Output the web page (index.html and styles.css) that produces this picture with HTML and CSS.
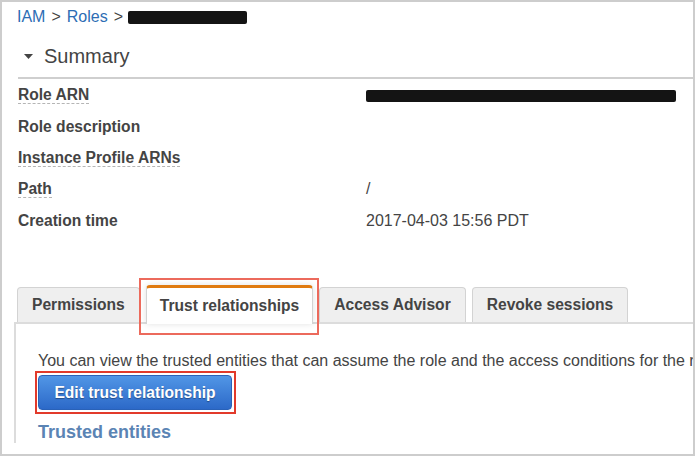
FILE: index.html
```html
<!DOCTYPE html>
<html>
<head>
<meta charset="utf-8">
<link rel="stylesheet" href="styles.css">
</head>
<body>
<div class="frame">
  <div class="crumbs">
    <a class="link">IAM</a><span class="sep">&gt;</span><a class="link">Roles</a><span class="sep">&gt;</span><span class="redact redact-name"></span>
  </div>
  <div class="summary-head">
    <svg class="caret" width="9" height="5" viewBox="0 0 9 5"><path d="M0 0 H9 L4.5 5 Z" fill="#444"/></svg>
    <span class="summary-title">Summary</span>
  </div>
  <div class="rows">
    <div class="row"><span class="label dashed">Role ARN</span><span class="value"><span class="redact redact-arn"></span></span></div>
    <div class="row"><span class="label">Role description</span><span class="value"></span></div>
    <div class="row"><span class="label dashed">Instance Profile ARNs</span><span class="value"></span></div>
    <div class="row"><span class="label dashed">Path</span><span class="value">/</span></div>
    <div class="row"><span class="label">Creation time</span><span class="value">2017-04-03 15:56 PDT</span></div>
  </div>
  <div class="tabs">
    <div class="tab">Permissions</div>
    <div class="tab active">Trust relationships</div>
    <div class="tab">Access Advisor</div>
    <div class="tab">Revoke sessions</div>
  </div>
  <div class="panel">
    <p class="intro">You can view the trusted entities that can assume the role and the access conditions for the role.</p>
    <span class="hl"><button class="btn">Edit trust relationship</button></span>
    <h3 class="entities">Trusted entities</h3>
  </div>
</div>
</body>
</html>
```
FILE: styles.css
```css
* { box-sizing: border-box; }
html, body { margin: 0; padding: 0; background: #fff; }
body {
  font-family: "Liberation Sans", Arial, Helvetica, sans-serif;
  color: #444;
  font-size: 16px;
}
.frame {
  width: 695px;
  height: 456px;
  border: 2px solid #cdcdcd;
  overflow: hidden;
  padding-left: 12px;
}
.crumbs {
  padding: 6px 0 0 3px;
  line-height: 18px;
  height: 24px;
  display: flex;
  align-items: center;
  white-space: nowrap;
}
.link { color: #2d6db4; }
.sep { margin: 0 6px 0 6px; color: #444; }
.redact { display: inline-block; background: #141414; border-radius: 2px; }
.redact-name { width: 119px; height: 13px; margin-left: -1px; }
.redact-arn { width: 310px; height: 12px; vertical-align: middle; }
.summary-head {
  margin: 18px 0 0 4px;
  height: 35px;
  padding-bottom: 9px;
  border-bottom: 2px solid #cfcfcf;
  display: flex;
  align-items: center;
}
.caret { margin-left: 6px; margin-right: 11px; }
.summary-title { font-size: 20px; line-height: 24px; color: #444; }
.rows { padding-left: 4px; }
.row {
  position: relative;
  height: 31.5px;
  display: flex;
  align-items: center;
}
.label {
  font-weight: bold;
  font-size: 15.6px;
  color: #444;
  line-height: 17px;
}
.label.dashed {
  border-bottom: 1px dashed #b5b5b5;
}
.value {
  position: absolute;
  left: 348px;
  color: #444;
}
.tabs {
  display: flex;
  align-items: flex-end;
  margin-top: 48.5px;
  padding-left: 3px;
  position: relative;
  z-index: 2;
}
.tab {
  height: 35px;
  padding: 0 14px;
  margin-right: 6px;
  border: 1px solid #d3d3d3;
  border-bottom: none;
  border-radius: 4px 4px 0 0;
  background: #efefef;
  font-weight: bold;
  font-size: 15.6px;
  display: flex;
  align-items: center;
  white-space: nowrap;
}
.tab.active {
  position: relative;
  height: 39px;
  padding: 0 13px;
  margin-bottom: -2px;
  background: #fff;
  border-top: 3px solid #e07b10;
  border-color: #e07b10 #d3d3d3 #fff;
  box-shadow: 0 0 6px rgba(0,0,0,0.12);
}
.tab.active::after {
  content: "";
  position: absolute;
  top: -10px;
  left: -8px;
  right: -7px;
  bottom: -11px;
  border: 2px solid #ec6a5c;
}
.panel {
  border-top: 2px solid #dcdcdc;
  border-left: 2px solid #dcdcdc;
  padding: 28px 0 0 19px;
  white-space: nowrap;
  position: relative;
  z-index: 1;
}
.intro {
  margin: 0 0 0 3px;
  line-height: 18px;
  color: #444;
}
.hl {
  display: inline-block;
  margin-top: 1px;
  border: 2px solid #e23a2b;
  padding: 2px 2px 2px 1px;
}
.btn {
  height: 35px;
  width: 194px;
  padding: 0;
  border: 1px solid #2a62b8;
  border-radius: 4px;
  background: linear-gradient(#5196e6, #2c69c8);
  color: #fff;
  font-family: inherit;
  font-size: 15.6px;
  font-weight: bold;
  text-shadow: 0 1px 1px rgba(0,0,0,0.35);
  display: block;
}
.entities {
  margin: 7px 0 0 3px;
  font-size: 18px;
  line-height: 22px;
  color: #5b84b4;
  font-weight: bold;
}
```
